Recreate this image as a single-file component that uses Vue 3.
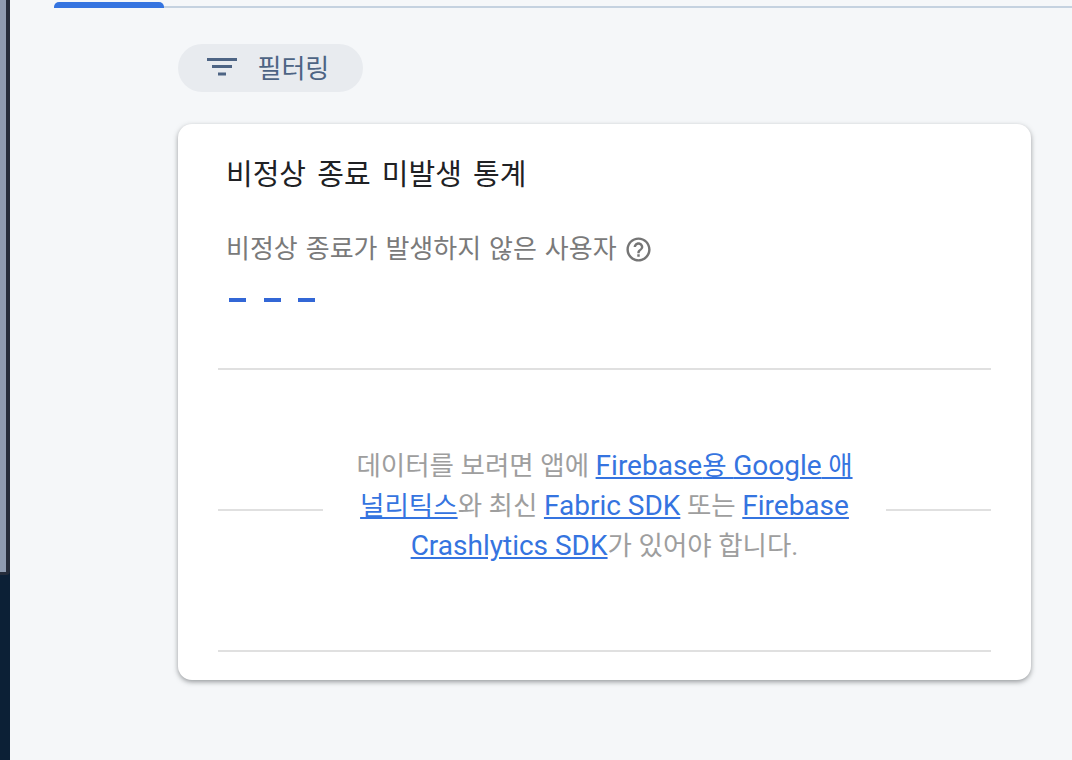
<template>
  <div class="page">
    <!-- Left window edge -->
    <div class="edge">
      <div class="edge-top"></div>
    </div>

    <div class="main">
      <div class="tabs">
        <div class="tab-active"></div>
      </div>

      <div class="content">
        <button class="filter-btn" type="button">
          <svg class="filter-icon" width="36" height="36" viewBox="0 0 36 36">
            <path d="M3 9.500h30M8 16.500h20M14 24h8" />
          </svg>
          <span>필터링</span>
        </button>

        <section class="card">
          <h2 class="card-title">비정상 종료 미발생 통계</h2>

          <div class="stat-label">
            <span>비정상 종료가 발생하지 않은 사용자</span>
            <svg class="help-icon" width="29" height="29" viewBox="0 0 24 24">
              <path d="M11 18h2v-2h-2v2zm1-16C6.480 2 2 6.480 2 12s4.480 10 10 10 10-4.480 10-10S17.520 2 12 2zm0 18c-4.410 0-8-3.590-8-8s3.590-8 8-8 8 3.590 8 8-3.590 8-8 8zm0-14c-2.210 0-4 1.790-4 4h2c0-1.100.9-2 2-2s2 .9 2 2c0 2-3 1.750-3 5h2c0-2.250 3-2.500 3-5 0-2.210-1.790-4-4-4z" />
            </svg>
          </div>

          <div class="stat-value">
            <i v-for="n in 3" :key="n" class="dash"></i>
          </div>

          <div class="chart">
            <div class="chart-mid">
              <div class="grid-line"></div>
              <p class="empty-text">
                데이터를 보려면 앱에 <a href="#"><span class="latin">Firebase</span>용 <span class="latin">Google</span> 애<br />널리틱스</a>와 최신 <a href="#"><span class="latin">Fabric SDK</span></a> 또는 <a href="#"><span class="latin">Firebase</span><br /><span class="latin">Crashlytics SDK</span></a>가 있어야 합니다.
              </p>
              <div class="grid-line"></div>
            </div>
          </div>
        </section>
      </div>
    </div>
  </div>
</template>

<script setup>
</script>

<style>
html,
body {
  margin: 0;
  background: #f5f7f9;
}
</style>

<style scoped>
.page {
  display: flex;
  width: 1072px;
  height: 760px;
  overflow: hidden;
  background: #f5f7f9;
  font-family: Roboto, "Noto Sans CJK KR", sans-serif;
}

.edge {
  width: 10px;
  flex: none;
  background: #0c2036;
}

.edge-top {
  box-sizing: border-box;
  width: 10px;
  height: 575px;
  background: #8e9bb0;
  border-right: 4px solid #252c3a;
  border-bottom: 3px solid #252c3a;
  border-bottom-right-radius: 4px;
}

.main {
  flex: 1;
  min-width: 0;
}

.tabs {
  box-sizing: border-box;
  height: 8px;
  margin-left: 44px;
  border-bottom: 2px solid #c5d2e0;
  position: relative;
}

.tab-active {
  position: absolute;
  left: 0;
  top: 2px;
  width: 110px;
  height: 6px;
  background: #3574e0;
  border-radius: 5px 5px 0 0;
}

.content {
  padding: 36px 41px 0 168px;
}

.filter-btn {
  display: flex;
  align-items: center;
  gap: 17.500px;
  box-sizing: border-box;
  width: 185px;
  height: 48px;
  padding: 0 0 4px 26px;
  border: none;
  border-radius: 24px;
  background: #e8ebef;
  color: #4d6484;
  font-family: inherit;
  font-size: 26px;
}

.filter-icon {
  flex: none;
  margin-top: 4px;
}

.filter-icon path {
  fill: none;
  stroke: #4d6484;
  stroke-width: 3;
}

.card {
  box-sizing: border-box;
  height: 556px;
  margin-top: 32px;
  padding: 31px 40px 0;
  background: #fff;
  border-radius: 14px;
  box-shadow: 0 2px 5px rgba(60, 64, 67, 0.5);
}

.card-title {
  margin: 0;
  padding-left: 8px;
  color: #202124;
  font-size: 29px;
  font-weight: 400;
  line-height: 40px;
  word-spacing: 4px;
}

.stat-label {
  display: flex;
  align-items: center;
  gap: 7px;
  margin-top: 39px;
  padding-left: 8px;
  height: 30px;
  color: #7a7a7a;
  font-size: 26px;
  line-height: 30px;
  word-spacing: 1.500px;
}

.help-icon {
  fill: #757575;
}

.stat-value {
  display: flex;
  gap: 17.500px;
  margin-top: 34px;
  padding-left: 11px;
}

.dash {
  display: block;
  width: 17px;
  height: 4px;
  background: #3367d6;
}

.chart {
  box-sizing: border-box;
  height: 284px;
  margin-top: 66px;
  border-top: 2px solid #e0e0e0;
  border-bottom: 2px solid #e0e0e0;
}

.chart-mid {
  display: flex;
  align-items: center;
  justify-content: space-between;
  height: 280px;
}

.grid-line {
  width: 105px;
  height: 2px;
  background: #e0e0e0;
}

.empty-text {
  margin: 0 0 8px;
  color: #9e9e9e;
  font-size: 26.500px;
  line-height: 40px;
  text-align: center;
}

.latin {
  font-size: 28px;
}

.empty-text a {
  color: #3574e0;
  text-decoration: underline;
}
</style>
